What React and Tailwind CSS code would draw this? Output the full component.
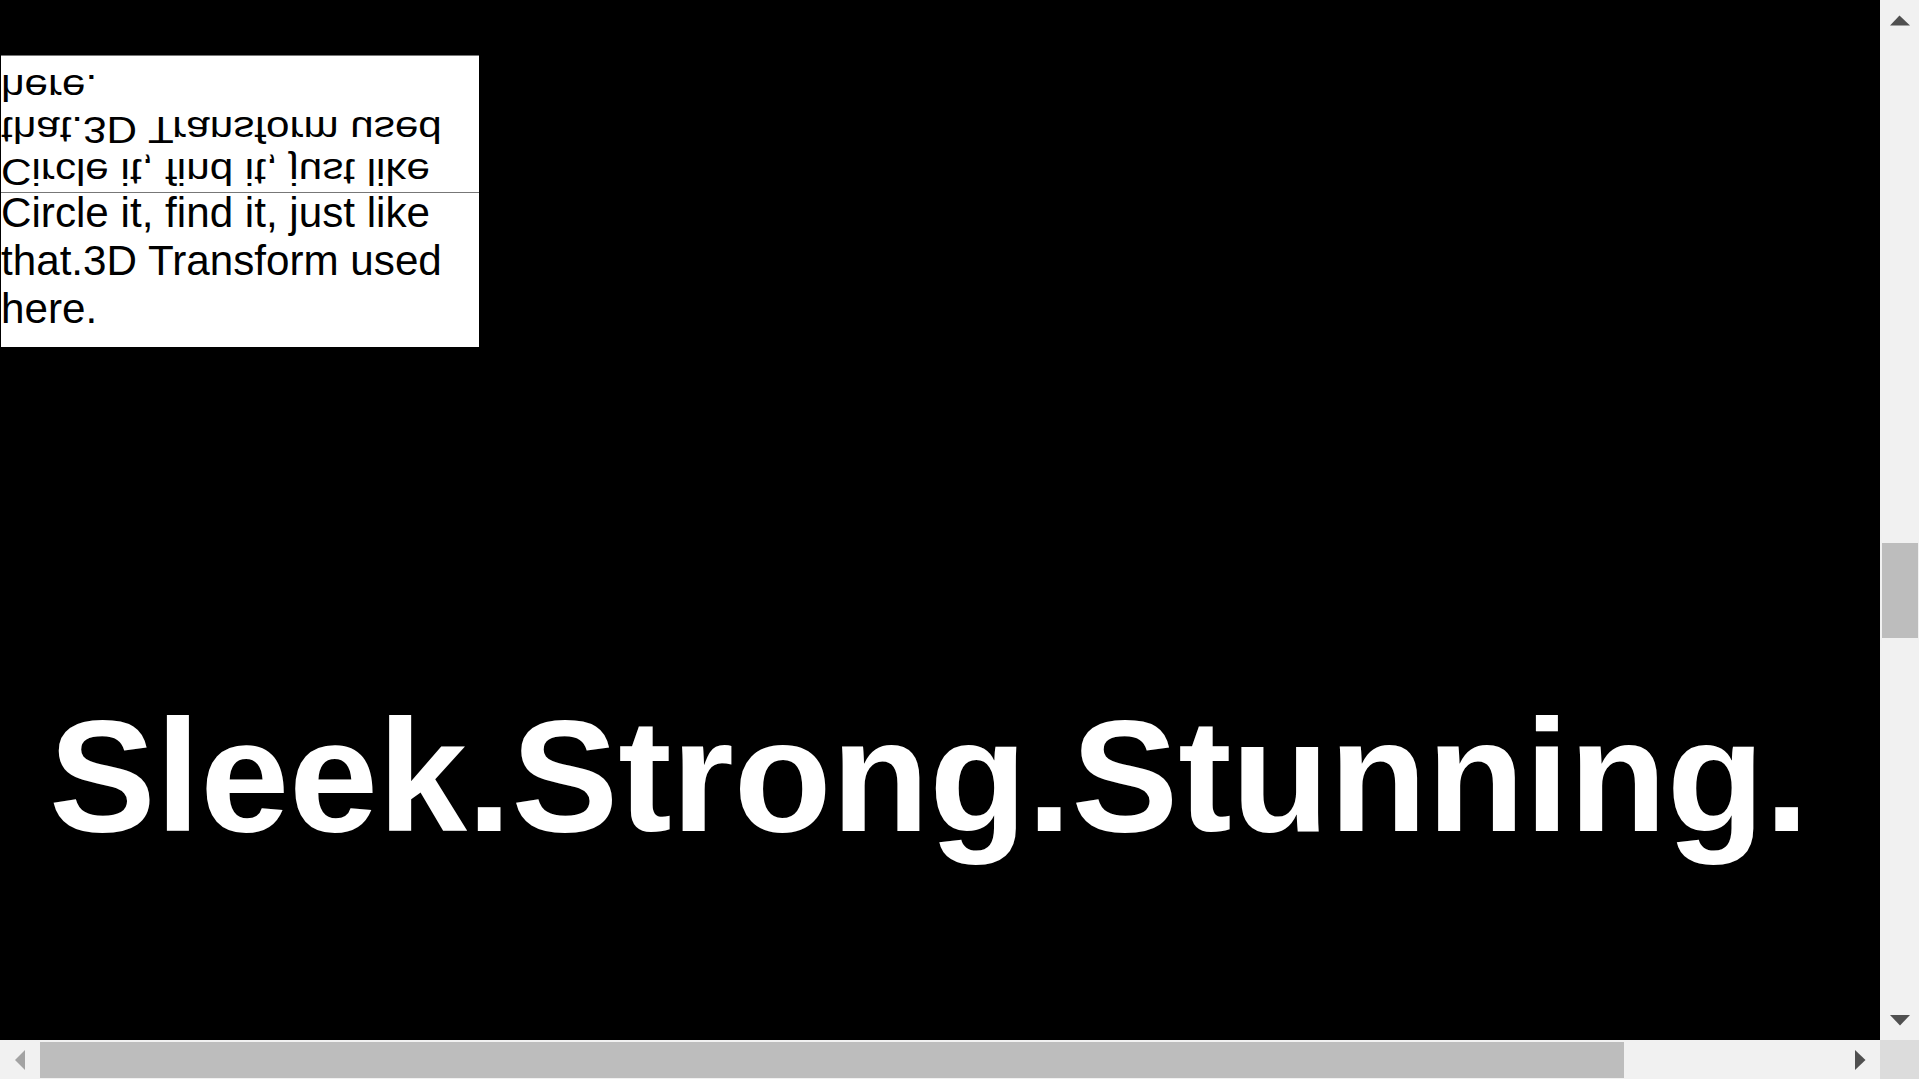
const Triangle = ({ points, fill }) => (
  <svg className="w-[39px] h-[39px]" viewBox="0 0 39 39">
    <polygon points={points} fill={fill} />
  </svg>
);

const Card = () => (
  <div className="w-[478px] ml-px flex flex-col">
    {/* reflection */}
    <div className="h-[137px] border-t border-[#777] bg-white flex flex-col justify-center">
      <p aria-hidden="true" className="shrink-0 text-[42.2px] leading-[48px] text-black [transform:scaleY(-0.87)] translate-y-[5px]">
        Circle it, find it, just like that.3D Transform used here.
      </p>
    </div>
    <div className="h-[155px] border-t border-[#777] bg-white">
      <p className="-mt-[4px] text-[42.2px] leading-[48px] text-black">
        Circle it, find it, just like that.3D Transform used here.
      </p>
    </div>
  </div>
);

export default function App() {
  return (
    <div className="w-[1919px] h-[1079px] overflow-hidden flex flex-col bg-black font-['Liberation_Sans',Arial,sans-serif]">
      <div className="flex h-[1040px]">
        <main className="w-[1880px] pt-[55px]">
          <Card />
          <h1 className="w-[1858px] mt-[337px] text-center text-[160px] leading-[184px] font-bold text-white whitespace-nowrap">
            Sleek.Strong.Stunning.
          </h1>
        </main>

        {/* vertical scrollbar */}
        <div className="w-[39px] flex flex-col bg-[#f1f1f1]">
          <Triangle points="10,25.5 19.5,15.5 30,25.5" fill="#505050" />
          <div className="flex-1 pt-[504px] pl-[2px] pr-px">
            <div className="h-[95px] bg-[#bdbdbd]" />
          </div>
          <Triangle points="10,14 30,14 20,24.5" fill="#505050" />
        </div>
      </div>

      {/* horizontal scrollbar */}
      <div className="flex h-[39px] bg-[#f1f1f1]">
        <div className="w-[1880px] flex items-center">
          <Triangle points="15,20 25,10 25,30" fill="#a3a3a3" />
          <div className="w-[1584px] ml-px h-[36px] bg-[#bdbdbd]" />
          <div className="flex-1" />
          <Triangle points="14,10 24.5,20 14,30" fill="#505050" />
        </div>
        <div className="w-[39px] bg-[#dcdcdc]" />
      </div>
    </div>
  );
}
